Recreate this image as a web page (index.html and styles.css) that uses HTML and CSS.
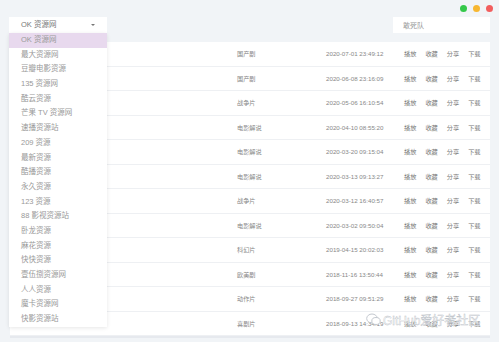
FILE: index.html
```html
<!DOCTYPE html>
<html>
<head>
  <meta charset="utf-8">
  <title>资源搜索</title>
  <link rel="stylesheet" href="styles.css">
</head>
<body>
  <div class="app">
    <div class="titlebar">
      <span class="dot green"></span>
      <span class="dot yellow"></span>
      <span class="dot red"></span>
    </div>

    <div class="toolbar">
      <div class="select">
        <div class="select-value">OK 资源网 <span class="caret"></span></div>
        <ul class="options">
          <li class="active">OK 资源网</li>
          <li>最大资源网</li>
          <li>豆瓣电影资源</li>
          <li>135 资源网</li>
          <li>酷云资源</li>
          <li>芒果 TV 资源网</li>
          <li>速播资源站</li>
          <li>209 资源</li>
          <li>最新资源</li>
          <li>酷播资源</li>
          <li>永久资源</li>
          <li>123 资源</li>
          <li>88 影视资源站</li>
          <li>卧龙资源</li>
          <li>麻花资源</li>
          <li>快快资源</li>
          <li>壹伍捌资源网</li>
          <li>人人资源</li>
          <li>魔卡资源网</li>
          <li>快影资源站</li>
        </ul>
      </div>
      <input class="search" type="text" placeholder="敢死队">
    </div>

    <div class="card">
      <div class="row"><span class="name"></span><span class="type">国产剧</span><span class="time">2020-07-01 23:49:12</span><span class="ops"><a>播放</a><a>收藏</a><a>分享</a><a>下载</a></span></div>
      <div class="row"><span class="name"></span><span class="type">国产剧</span><span class="time">2020-06-08 23:16:09</span><span class="ops"><a>播放</a><a>收藏</a><a>分享</a><a>下载</a></span></div>
      <div class="row"><span class="name"></span><span class="type">战争片</span><span class="time">2020-05-06 16:10:54</span><span class="ops"><a>播放</a><a>收藏</a><a>分享</a><a>下载</a></span></div>
      <div class="row"><span class="name"></span><span class="type">电影解说</span><span class="time">2020-04-10 08:55:20</span><span class="ops"><a>播放</a><a>收藏</a><a>分享</a><a>下载</a></span></div>
      <div class="row"><span class="name"></span><span class="type">电影解说</span><span class="time">2020-03-20 09:15:04</span><span class="ops"><a>播放</a><a>收藏</a><a>分享</a><a>下载</a></span></div>
      <div class="row"><span class="name"></span><span class="type">电影解说</span><span class="time">2020-03-13 09:13:27</span><span class="ops"><a>播放</a><a>收藏</a><a>分享</a><a>下载</a></span></div>
      <div class="row"><span class="name"></span><span class="type">战争片</span><span class="time">2020-03-12 16:40:57</span><span class="ops"><a>播放</a><a>收藏</a><a>分享</a><a>下载</a></span></div>
      <div class="row"><span class="name"></span><span class="type">电影解说</span><span class="time">2020-03-02 09:50:04</span><span class="ops"><a>播放</a><a>收藏</a><a>分享</a><a>下载</a></span></div>
      <div class="row"><span class="name"></span><span class="type">科幻片</span><span class="time">2019-04-15 20:02:03</span><span class="ops"><a>播放</a><a>收藏</a><a>分享</a><a>下载</a></span></div>
      <div class="row"><span class="name"></span><span class="type">欧美剧</span><span class="time">2018-11-16 13:50:44</span><span class="ops"><a>播放</a><a>收藏</a><a>分享</a><a>下载</a></span></div>
      <div class="row"><span class="name"></span><span class="type">动作片</span><span class="time">2018-09-27 09:51:29</span><span class="ops"><a>播放</a><a>收藏</a><a>分享</a><a>下载</a></span></div>
      <div class="row"><span class="name"></span><span class="type">喜剧片</span><span class="time">2018-09-13 14:34:19</span><span class="ops"><a>播放</a><a>收藏</a><a>分享</a><a>下载</a></span></div>
    </div>

    <!-- 水印 -->
    <div class="watermark">
      <svg width="15" height="13" viewBox="0 0 15 13">
        <ellipse cx="6" cy="5.5" rx="5.3" ry="4.5" fill="none" stroke="#c3c8cf" stroke-width="1"/>
        <ellipse cx="10" cy="8" rx="4.2" ry="3.5" fill="#fff" stroke="#c3c8cf" stroke-width="1"/>
      </svg>
      <span>GitHub爱好者社区</span>
    </div>
  </div>
</body>
</html>
```

FILE: styles.css
```css
/* 基本設定 */
html, body {
  margin: 0;
  padding: 0;
  width: 100%;
  height: 100%;
  background: #f1f4f7;
  font-family: "Liberation Sans", "Noto Sans CJK SC", sans-serif;
  color: #777;
  overflow: hidden;
}

.app {
  position: relative;
  height: 100%;
}

.titlebar {
  display: flex;
  justify-content: flex-end;
  align-items: center;
  gap: 6px;
  height: 16px;
  padding-right: 6px;
}

.dot {
  width: 7px;
  height: 7px;
  border-radius: 50%;
}

.dot.green { background: #34c84a; }
.dot.yellow { background: #f7b731; }
.dot.red { background: #f25e5e; }

.toolbar {
  display: flex;
  justify-content: space-between;
  align-items: flex-start;
  padding: 1px 9px 0 9px;
  height: 25px;
}

.select {
  position: relative;
  width: 98px;
  z-index: 5;
}

.select-value {
  height: 16px;
  line-height: 16px;
  padding-left: 12px;
  background: #fff;
  font-size: 7.5px;
  color: #777;
  position: relative;
}

.caret {
  position: absolute;
  right: 12px;
  top: 7px;
  border-left: 2px solid transparent;
  border-right: 2px solid transparent;
  border-top: 2px solid #777;
}

.options {
  position: absolute;
  top: 16px;
  left: 0;
  width: 98px;
  margin: 0;
  padding: 0;
  list-style: none;
  background: #fff;
  box-shadow: 0 1px 4px rgba(0, 0, 0, 0.1);
}

.options li {
  height: 14.7px;
  line-height: 14.7px;
  padding-left: 12px;
  font-size: 7.5px;
  color: #999;
}

.options li.active {
  background: #e8d9ee;
}

.search {
  width: 97px;
  height: 16px;
  box-sizing: border-box;
  border: none;
  outline: none;
  background: #fff;
  padding: 0 0 0 10px;
  font-family: "Liberation Sans", "Noto Sans CJK SC", sans-serif;
  font-size: 7px;
  color: #777;
}

.search::placeholder {
  color: #999;
}

.card {
  margin: 0 9px 0 10px;
  background: #fff;
  border-bottom: 2px solid #e6e9ee;
}

.row {
  display: grid;
  grid-template-columns: 227px 89px 78px 1fr;
  height: 24.5px;
  align-items: center;
  border-bottom: 1px solid #eef0f3;
  box-sizing: border-box;
  font-size: 6.2px;
  color: #888;
}

.ops {
  display: flex;
  gap: 9px;
}

.ops a {
  color: #777;
}

.watermark {
  position: absolute;
  left: 366px;
  top: 311px;
  display: flex;
  align-items: center;
  gap: 2px;
  font-size: 12px;
  color: #fff;
  -webkit-text-stroke: 0.4px #b9bec6;
  z-index: 6;
}
```
